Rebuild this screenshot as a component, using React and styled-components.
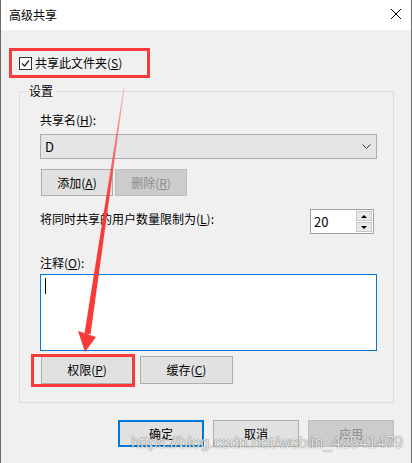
import React from 'react'
import styled, { createGlobalStyle, css } from 'styled-components'

const GlobalStyle = createGlobalStyle`
    html, body {
        margin: 0;
        padding: 0;
        background: #f0f0f0;
    }
    body {
        font-family: "Noto Sans CJK SC", "Noto Sans", sans-serif;
        font-size: 12px;
        color: #000;
    }
`

const Window = styled.div`
    position: relative;
    width: 412px;
    height: 463px;
    box-sizing: border-box;
    border-left: 1px solid #6b6b6b;
    border-right: 1px solid #6b6b6b;
    background: #f0f0f0;
    overflow: hidden;
`
const TitleBar = styled.div`
    height: 30px;
    background: #fff;
    display: flex;
    align-items: center;
    justify-content: space-between;
    padding: 0 9px 0 8px;
    line-height: 16px;
`
const CloseIcon = styled.svg`
    width: 12px;
    height: 12px;
    margin-bottom: 2px;
`
const Body = styled.div`
    padding: 25px 0 0 18px;
`
const CheckRow = styled.label`
    display: flex;
    align-items: center;
    height: 16px;
    line-height: 16px;
    gap: 3px;
`
const Box = styled.span`
    width: 11px;
    height: 11px;
    border: 1px solid #333;
    background: #fff;
    display: flex;
    align-items: center;
    justify-content: center;
`
const GroupBox = styled.div`
    position: relative;
    margin-top: 20px;
    width: 375px;
    box-sizing: border-box;
    border: 1px solid #dcdcdc;
    padding: 20px 16px 18px 20px;
`
const GroupTitle = styled.span`
    position: absolute;
    top: -9px;
    left: 6px;
    padding: 0 3px;
    line-height: 16px;
    background: #f0f0f0;
`
const Label = styled.div`
    line-height: 16px;
    height: 16px;
    margin-top: ${p => p.$mt || 0}px;
`
const Combo = styled.div`
    margin-top: 6px;
    height: 25px;
    box-sizing: border-box;
    border: 1px solid #adadad;
    background: #e5e5e5;
    display: flex;
    align-items: center;
    justify-content: space-between;
    padding: 0 5px 0 4px;
    font-size: 13px;
`
const Row = styled.div`
    display: flex;
    margin-top: ${p => p.$mt}px;
    gap: ${p => p.$gap || 0}px;
    justify-content: ${p => p.$justify || 'flex-start'};
    align-items: flex-start;
`
const Button = styled.div`
    box-sizing: border-box;
    width: ${p => p.$w}px;
    height: ${p => p.$h || 27}px;
    margin-left: ${p => p.$ml || 0}px;
    border: 1px solid #adadad;
    background: #e1e1e1;
    display: flex;
    align-items: center;
    justify-content: center;
    line-height: 16px;
    ${p => p.$disabled && css`
        background: #cccccc;
        border-color: #bfbfbf;
        color: #8b8b8b;
    `}
    ${p => p.$default && css`
        border: 2px solid #0078d7;
    `}
`
const Spin = styled.div`
    display: flex;
    width: 64px;
    height: 25px;
    box-sizing: border-box;
    margin-right: 3px;
    border: 1px solid #a0a0a0;
    background: #fff;
`
const SpinValue = styled.div`
    flex: 1;
    display: flex;
    align-items: center;
    padding-left: 3px;
    font-size: 13px;
`
const SpinButtons = styled.div`
    width: 16px;
    display: flex;
    flex-direction: column;
    gap: 1px;
    padding: 1px 1px 1px 0;
`
const SpinButton = styled.div`
    flex: 1;
    border: 1px solid #c8c8c8;
    background: #e8e8e8;
    display: flex;
    align-items: center;
    justify-content: center;
`
const Tri = styled.span`
    width: 0;
    height: 0;
    border-left: 3px solid transparent;
    border-right: 3px solid transparent;
    ${p => p.$down
        ? css`border-top: 3px solid #000;`
        : css`border-bottom: 3px solid #000;`}
`
const TextArea = styled.div`
    margin-top: 3px;
    height: 77px;
    box-sizing: border-box;
    border: 1px solid #0078d7;
    background: #fff;
    padding: 3px 0 0 4px;
`
const Caret = styled.div`
    width: 1px;
    height: 16px;
    background: #000;
`
const Footer = styled.div`
    display: flex;
    justify-content: flex-end;
    gap: 9px;
    width: 375px;
    margin-top: 17px;
`
const Annot = styled.div`
    position: absolute;
    left: ${p => p.$x}px;
    top: ${p => p.$y}px;
    width: ${p => p.$w}px;
    height: ${p => p.$h}px;
    box-sizing: border-box;
    border: 3px solid #f73b3b;
    pointer-events: none;
`
const Overlay = styled.svg`
    position: absolute;
    left: 0;
    top: 0;
    pointer-events: none;
`
const Watermark = styled.div`
    position: absolute;
    left: 130px;
    top: 434px;
    font-family: "Liberation Sans", Arial, sans-serif;
    font-size: 16px;
    line-height: 18px;
    color: rgba(255, 255, 255, 0.85);
    text-shadow: 0 0 1px rgba(0, 0, 0, 0.5), 0 0 1px rgba(0, 0, 0, 0.3);
    white-space: nowrap;
    pointer-events: none;
`

const App = () => (
    <Window>
        <GlobalStyle />
        <TitleBar>
            <span>高级共享</span>
            <CloseIcon viewBox="0 0 12 12">
                <path d="M1 1 L11 11 M11 1 L1 11" stroke="#000" strokeWidth="1" fill="none" />
            </CloseIcon>
        </TitleBar>
        <Body>
            <CheckRow>
                <Box>
                    <svg width="9" height="9" viewBox="0 0 9 9">
                        <polyline points="1,4.5 3.5,7 8,1.5" stroke="#222" strokeWidth="1.2" fill="none" />
                    </svg>
                </Box>
                <span>共享此文件夹(<u>S</u>)</span>
            </CheckRow>
            <GroupBox>
                <GroupTitle>设置</GroupTitle>
                <Label>共享名(<u>H</u>):</Label>
                <Combo>
                    <span>D</span>
                    <svg width="9" height="6" viewBox="0 0 9 6">
                        <polyline points="0.5,0.5 4.5,4.5 8.5,0.5" stroke="#333" strokeWidth="1" fill="none" />
                    </svg>
                </Combo>
                <Row $mt={10} $gap={2}>
                    <Button $w={72} $ml={1}>添加(<u>A</u>)</Button>
                    <Button $w={72} $disabled>删除(<u>R</u>)</Button>
                </Row>
                <Row $mt={13} $justify="space-between">
                    <Label $mt={2}>将同时共享的用户数量限制为(<u>L</u>):</Label>
                    <Spin>
                        <SpinValue>20</SpinValue>
                        <SpinButtons>
                            <SpinButton><Tri /></SpinButton>
                            <SpinButton><Tri $down /></SpinButton>
                        </SpinButtons>
                    </Spin>
                </Row>
                <Label $mt={21}>注释(<u>O</u>):</Label>
                <TextArea><Caret /></TextArea>
                <Row $mt={5} $gap={7}>
                    <Button $w={92} $h={28} $ml={1}>权限(<u>P</u>)</Button>
                    <Button $w={93} $h={28}>缓存(<u>C</u>)</Button>
                </Row>
            </GroupBox>
            <Footer>
                <Button $w={86} $default>确定</Button>
                <Button $w={86}>取消</Button>
                <Button $w={86} $disabled>应用</Button>
            </Footer>
        </Body>
        <Annot $x={8} $y={48} $w={141} $h={30} />
        <Annot $x={30} $y={354} $w={104} $h={33} />
        <Overlay width="412" height="463" viewBox="0 0 412 463">
            <defs>
                <linearGradient id="fade" x1="0" y1="88" x2="0" y2="200" gradientUnits="userSpaceOnUse">
                    <stop offset="0" stopColor="#f73b3b" stopOpacity="0.3" />
                    <stop offset="1" stopColor="#f73b3b" stopOpacity="1" />
                </linearGradient>
            </defs>
            <polygon points="122.6,88 123.4,88 89.6,334 83.4,334" fill="url(#fade)" />
            <polygon points="77,331 95,337 84,352" fill="#f73b3b" />
        </Overlay>
        <Watermark>https://blog.csdn.net/weixin_42541479</Watermark>
    </Window>
)

export default App
